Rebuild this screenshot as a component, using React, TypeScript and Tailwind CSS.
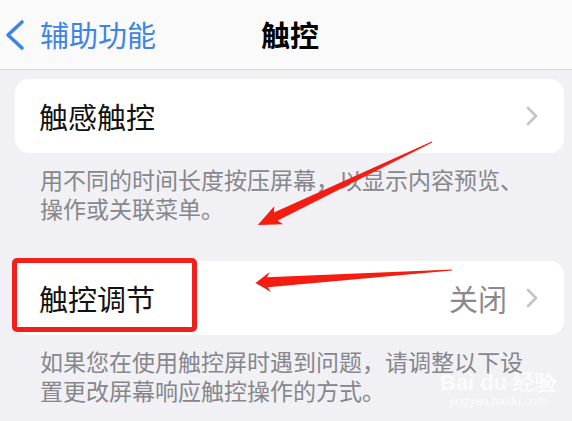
import { ReactNode } from "react";

function Chevron() {
    return (
        <svg width="12" height="20" viewBox="0 0 12 20" fill="none" className="shrink-0">
            <path d="M2 2l8 8-8 8" stroke="#c4c4c7" strokeWidth="2.6" strokeLinecap="round" strokeLinejoin="round" />
        </svg>
    );
}

function Row({ label, value }: { label: string; value?: string }) {
    return (
        <div className="flex h-[74px] items-center rounded-[14px] bg-white pl-[24px] pr-[26px]">
            <span className="flex-1 text-[29px] leading-none text-[#111]">{label}</span>
            {value && <span className="mr-[19px] text-[29px] leading-none text-[#8a8a8e]">{value}</span>}
            <Chevron />
        </div>
    );
}

function Note({ children }: { children: ReactNode }) {
    return <p className="w-[522px] pl-[25px] pt-[12px] text-[23px] leading-[29px] text-[#86868b]">{children}</p>;
}

// red annotation arrow, drawn along x then rotated into place
function Arrow({ x, y, angle, len, head, barb, shaft }: { x: number; y: number; angle: number; len: number; head: number; barb: number; shaft: number }) {
    const b = len - head;
    const pts = `0,-0.6 ${b},-${shaft} ${b - 3},-${barb} ${len},0 ${b - 3},${barb} ${b},${shaft} 0,0.6`;
    return (
        <g transform={`translate(${x} ${y}) rotate(${angle})`}>
            <polygon points={pts} fill="#f51d12" />
        </g>
    );
}

export default function App() {
    return (
        <div className="relative h-[421px] w-[572px] overflow-hidden bg-[#f0f0f5] font-['Noto_Sans_CJK_SC',sans-serif]">
            <header className="relative flex h-[70px] items-center border-b border-[#dadadd] bg-[#fafafa]">
                <div className="flex items-center gap-[14px] pl-[4px]">
                    <svg width="22" height="32" viewBox="0 0 22 32" fill="none">
                        <path d="M18 3L4 16l14 13" stroke="#3d84e6" strokeWidth="3.6" strokeLinecap="round" strokeLinejoin="round" />
                    </svg>
                    <span className="text-[29px] leading-none text-[#3d84e6]">辅助功能</span>
                </div>
                <h1 className="absolute left-[290px] -translate-x-1/2 text-[29px] font-bold leading-none text-black">触控</h1>
            </header>

            <main className="pl-[15px] pr-[8px] pt-[9px]">
                <Row label="触感触控" />
                <Note>用不同的时间长度按压屏幕，以显示内容预览、操作或关联菜单。</Note>

                <div className="mt-[38px]">
                    <Row label="触控调节" value="关闭" />
                </div>
                <Note>如果您在使用触控屏时遇到问题，请调整以下设置更改屏幕响应触控操作的方式。</Note>
            </main>

            {/* annotations */}
            <div className="absolute left-[12px] top-[258px] h-[74px] w-[185px] rounded-[5px] border-[5px] border-[#f2201b]" />
            <svg className="pointer-events-none absolute inset-0" width="572" height="421">
                <Arrow x={432} y={142} angle={154.5} len={193} head={20} barb={10} shaft={4.5} />
                <Arrow x={452} y={270} angle={176.2} len={197} head={12} barb={10} shaft={5} />
            </svg>

            <div className="pointer-events-none absolute left-[440px] top-[372px] flex flex-col items-center whitespace-nowrap font-['Liberation_Sans',sans-serif] text-white/75">
                <span className="text-[22px] font-bold leading-none">Bai du 经验</span>
                <span className="text-[12px] leading-tight">jingyan.baidu.com</span>
            </div>
        </div>
    );
}
